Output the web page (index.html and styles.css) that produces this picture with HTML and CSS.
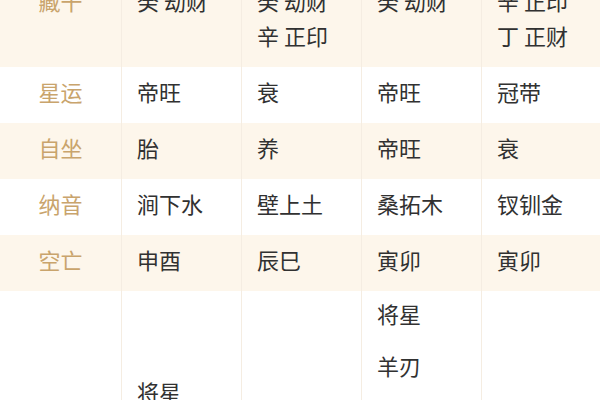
FILE: index.html
```html
<!DOCTYPE html>
<html lang="zh-CN">
<head>
<meta charset="utf-8">
<link rel="stylesheet" href="styles.css">
</head>
<body>
<div class="table">
  <div class="row tint">
    <div class="cell label">藏干</div>
    <div class="cell"><div class="line">癸 劫财</div></div>
    <div class="cell"><div class="line">己 七杀</div><div class="line">癸 劫财</div><div class="line">辛 正印</div></div>
    <div class="cell"><div class="line">癸 劫财</div></div>
    <div class="cell"><div class="line">戊 偏官</div><div class="line">辛 正印</div><div class="line">丁 正财</div></div>
  </div>
  <div class="row">
    <div class="cell label">星运</div>
    <div class="cell">帝旺</div>
    <div class="cell">衰</div>
    <div class="cell">帝旺</div>
    <div class="cell">冠带</div>
  </div>
  <div class="row tint">
    <div class="cell label">自坐</div>
    <div class="cell">胎</div>
    <div class="cell">养</div>
    <div class="cell">帝旺</div>
    <div class="cell">衰</div>
  </div>
  <div class="row">
    <div class="cell label">纳音</div>
    <div class="cell">涧下水</div>
    <div class="cell">壁上土</div>
    <div class="cell">桑拓木</div>
    <div class="cell">钗钏金</div>
  </div>
  <div class="row tint">
    <div class="cell label">空亡</div>
    <div class="cell">申酉</div>
    <div class="cell">辰巳</div>
    <div class="cell">寅卯</div>
    <div class="cell">寅卯</div>
  </div>
  <div class="row last">
    <div class="cell label">神煞</div>
    <div class="cell stack"><div>将星</div><div>华盖</div><div>天乙贵人</div></div>
    <div class="cell stack"><div>驿马</div><div>亡神</div></div>
    <div class="cell stack"><div>将星</div><div>羊刃</div><div>天乙贵人</div><div>太极贵人</div><div>桃花</div><div>灾煞</div></div>
    <div class="cell stack"><div>华盖</div></div>
  </div>
</div>
</body>
</html>
```

FILE: styles.css
```css
html, body {
  margin: 0;
  padding: 0;
  background: #ffffff;
}
body {
  font-family: "Noto Sans CJK SC", "Noto Sans", sans-serif;
  font-size: 22px;
  color: #313131;
  overflow: hidden;
}
.table {
  margin-top: -59px;
  width: 600px;
}
.row {
  display: grid;
  grid-template-columns: 121px 120px 120px 120px 119px;
  background: #ffffff;
}
.row.tint {
  background: #fdf6eb;
}
.cell {
  display: flex;
  flex-direction: column;
  justify-content: center;
  line-height: 35px;
  padding: 7px 0 14px 15px;
  border-left: 1px solid #f5ede2;
}
.cell.label {
  border-left: none;
  padding-left: 0;
  align-items: center;
  color: #c9a46c;
}
.row.last .cell {
  padding-top: 5px;
}
.cell.stack {
  gap: 17px;
}
.line {
  white-space: pre;
}
```
